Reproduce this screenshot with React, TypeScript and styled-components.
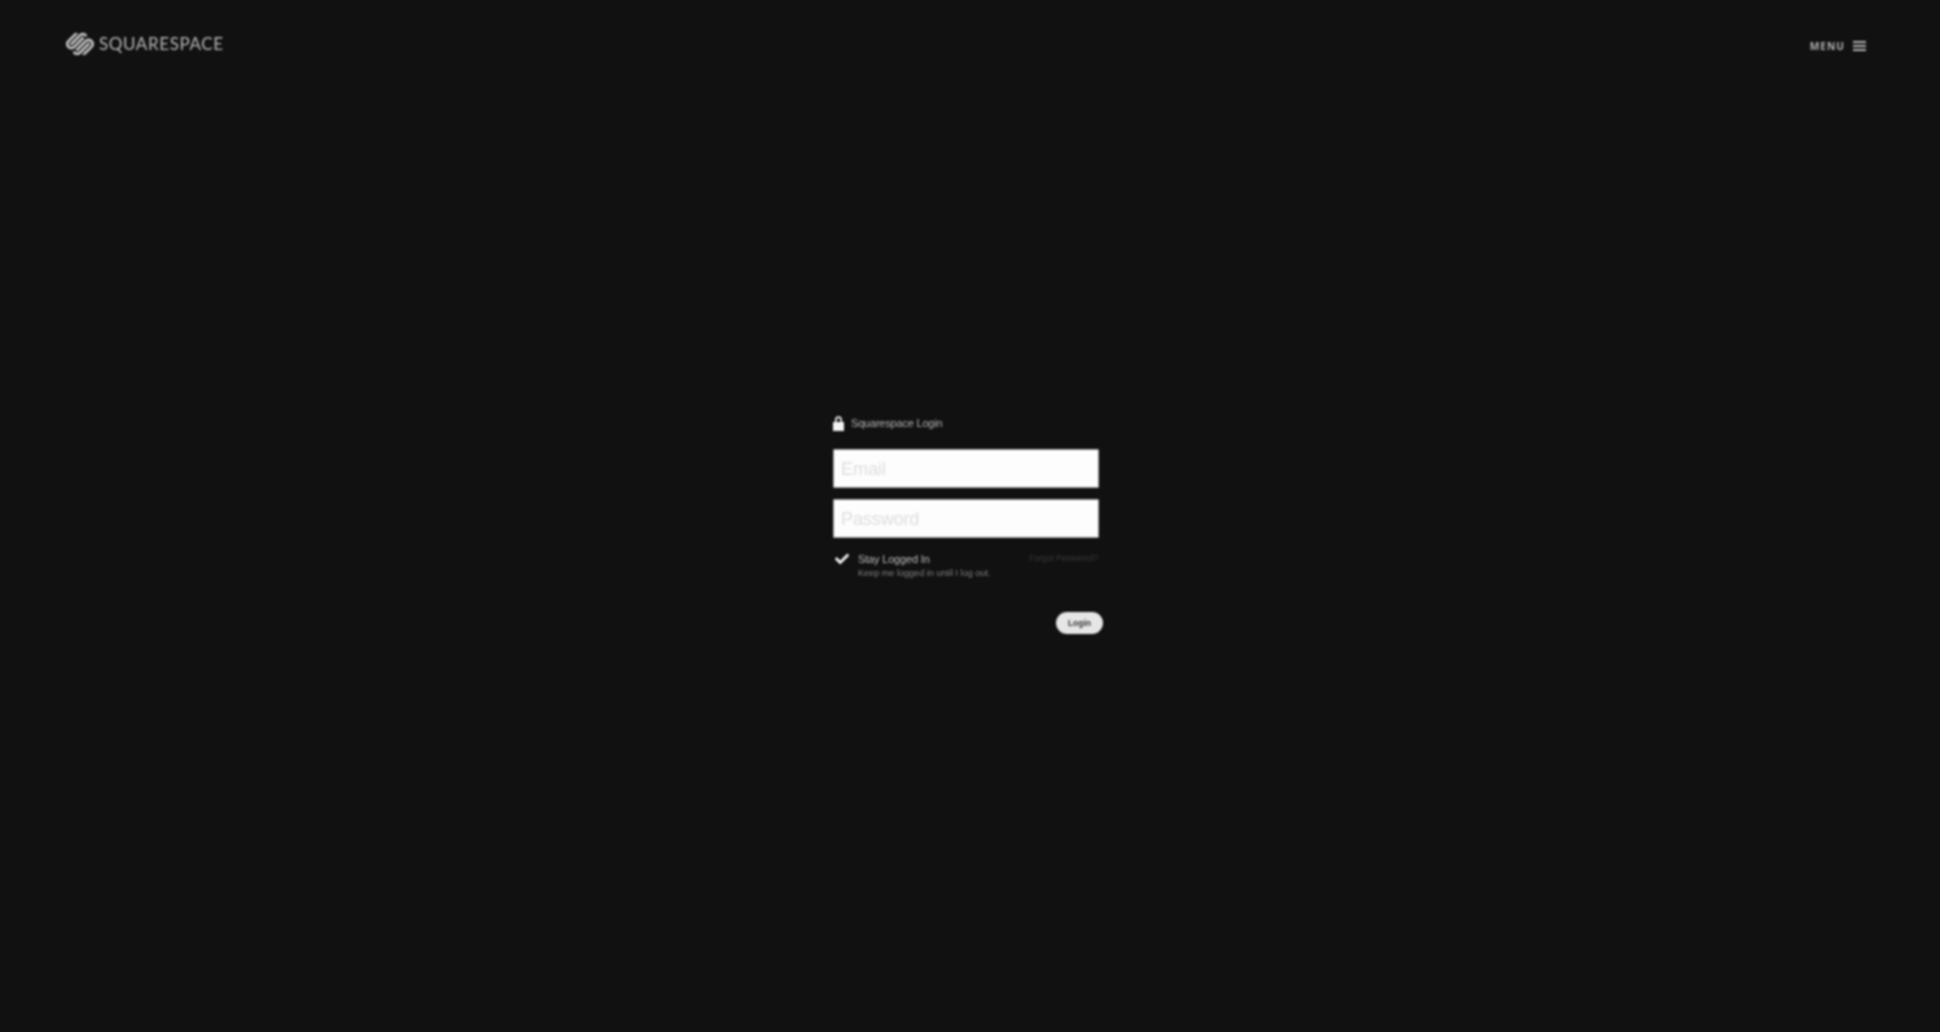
import React from "react"
import styled, { createGlobalStyle } from "styled-components"
import { SiSquarespace } from "react-icons/si"
import { FaCheck } from "react-icons/fa"

const GlobalStyle = createGlobalStyle`
  html, body {
    margin: 0;
    height: 100%;
    background: #111111;
  }
  body {
    font-family: "Liberation Sans", Arial, sans-serif;
    overflow: hidden;
  }
`

const Page = styled.div`
  width: 1940px;
  height: 1032px;
  background: #111111;
  filter: blur(1px);
`

const Header = styled.header`
  display: flex;
  justify-content: space-between;
  align-items: flex-start;
  padding: 30px 74px 0 66px;
  height: 58px;
`

const Brand = styled.div`
  display: flex;
  align-items: center;
  gap: 5px;
  color: #b9b9b9;
`

const Wordmark = styled.span`
  margin-top: -1px;
  font-family: Lato, "Liberation Sans", sans-serif;
  font-size: 17px;
  line-height: 26px;
  letter-spacing: 0.6px;
`

const MenuButton = styled.div`
  display: flex;
  align-items: center;
  gap: 8px;
  margin-top: 9px;
  color: #b4b4b4;
`

const MenuLabel = styled.span`
  font-family: "Open Sans", sans-serif;
  font-size: 10.2px;
  font-weight: 700;
  line-height: 14px;
  letter-spacing: 1px;
`

const Burger = styled.div`
  display: flex;
  flex-direction: column;
  gap: 2px;
  width: 13px;
  margin-top: -1px;
`

const BurgerLine = styled.span`
  height: 2px;
  background: #b4b4b4;
`

const Main = styled.main`
  display: flex;
  justify-content: center;
  padding-top: 327px;
`

const Form = styled.form`
  width: 274px;
  display: flex;
  flex-direction: column;
`

const Title = styled.div`
  display: flex;
  align-items: center;
  gap: 7px;
  height: 16px;
  color: #b5b5b5;
  font-size: 11px;
  letter-spacing: -0.2px;
`

const Field = styled.input`
  display: block;
  box-sizing: border-box;
  width: 266px;
  height: 39px;
  margin-top: ${p => (p.type === "email" ? "18px" : "11px")};
  padding: 1px 7px 0;
  border: 1px solid #999;
  border-radius: 1px;
  background: #fdfdfd;
  font-family: "Liberation Sans", Arial, sans-serif;
  font-size: 18.2px;
  letter-spacing: -0.2px;
  outline: none;

  &::placeholder {
    color: #dedede;
    opacity: 1;
  }
`

const Options = styled.div`
  display: flex;
  justify-content: space-between;
  width: 265px;
  margin-top: 14px;
`

const StayRow = styled.div`
  display: flex;
  gap: 8px;
  color: #f4f4f4;
`

const CheckIcon = styled(FaCheck)`
  width: 14px;
  height: 14px;
  margin-left: 2px;
  margin-right: 1px;
`

const StayText = styled.div`
  display: flex;
  flex-direction: column;
  gap: 1px;
`

const StayLabel = styled.span`
  color: #bcbcbc;
  font-size: 11px;
  line-height: 14px;
  letter-spacing: -0.17px;
`

const StayHint = styled.span`
  color: #808080;
  font-size: 9.1px;
  line-height: 13px;
`

const Forgot = styled.a`
  color: #3a3a3a;
  font-size: 8.5px;
  line-height: 13px;
`

const Actions = styled.div`
  display: flex;
  justify-content: flex-end;
  margin-top: 32px;
  padding-right: 4px;
`

const LoginButton = styled.button`
  width: 47px;
  height: 22px;
  padding: 0;
  border: none;
  border-radius: 11px;
  background: #e6e6e6;
  color: #333;
  font-family: "Liberation Sans", Arial, sans-serif;
  font-size: 8.5px;
  font-weight: 700;
`

const LockIcon = () => (
  <svg width="11" height="15" viewBox="0 0 12 16" preserveAspectRatio="none" fill="#f4f4f4">
    <path fillRule="evenodd" d="M2.2 6.5V4a3.8 3.8 0 0 1 7.6 0v2.5H12V16H0V6.5h2.2zM4 6.5h4V4a2 2 0 0 0-4 0v2.5z" />
  </svg>
)

export default function App() {
  return (
    <>
      <GlobalStyle />
      <Page>
        <Header>
          <Brand>
            <SiSquarespace size={28} color="#c4c4c4" />
            <Wordmark>SQUARESPACE</Wordmark>
          </Brand>
          <MenuButton>
            <MenuLabel>MENU</MenuLabel>
            <Burger>
              <BurgerLine />
              <BurgerLine />
              <BurgerLine />
            </Burger>
          </MenuButton>
        </Header>
        <Main>
          <Form>
            <Title>
              <LockIcon />
              Squarespace Login
            </Title>
            <Field type="email" placeholder="Email" />
            <Field type="password" placeholder="Password" />
            <Options>
              <StayRow>
                <CheckIcon />
                <StayText>
                  <StayLabel>Stay Logged In</StayLabel>
                  <StayHint>Keep me logged in until I log out.</StayHint>
                </StayText>
              </StayRow>
              <Forgot>Forgot Password?</Forgot>
            </Options>
            <Actions>
              <LoginButton type="button">Login</LoginButton>
            </Actions>
          </Form>
        </Main>
      </Page>
    </>
  )
}
